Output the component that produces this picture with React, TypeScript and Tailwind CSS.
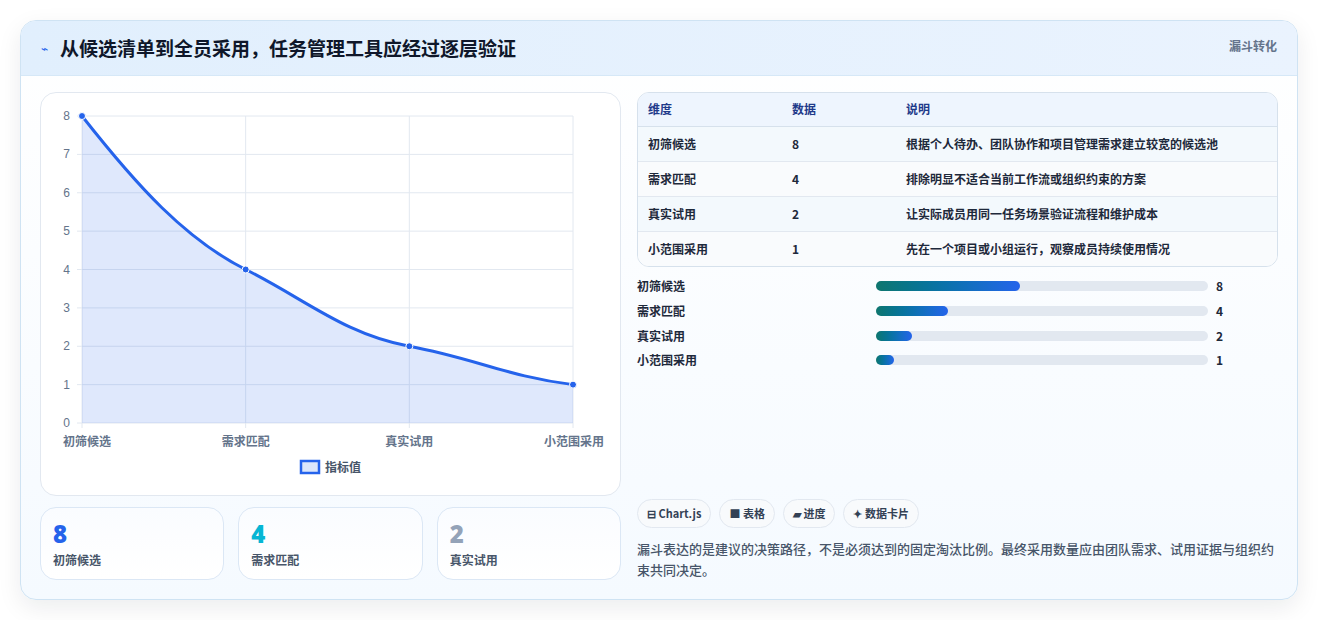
import React from "react";

const rows = [
  ["初筛候选", "8", "根据个人待办、团队协作和项目管理需求建立较宽的候选池"],
  ["需求匹配", "4", "排除明显不适合当前工作流或组织约束的方案"],
  ["真实试用", "2", "让实际成员用同一任务场景验证流程和维护成本"],
  ["小范围采用", "1", "先在一个项目或小组运行，观察成员持续使用情况"],
];

function Chart() {
  const x0 = 41, x1 = 532, yT = 23, yB = 330;
  const xs = [0, 1, 2, 3].map((i) => x0 + ((x1 - x0) / 3) * i);
  const y = (v: number) => yB - ((yB - yT) / 8) * v;
  const vals = [8, 4, 2, 1];
  const p = vals.map((v, i) => [xs[i], y(v)]);
  const d = `M${p[0][0]},${p[0][1]} C${p[0][0] + 55},${p[0][1] + 70} ${p[1][0] - 60},${p[1][1] - 30} ${p[1][0]},${p[1][1]} C${p[1][0] + 60},${p[1][1] + 30} ${p[2][0] - 65},${p[2][1] - 12} ${p[2][0]},${p[2][1]} C${p[2][0] + 65},${p[2][1] + 12} ${p[3][0] - 65},${p[3][1] - 8} ${p[3][0]},${p[3][1]}`;
  const labels = ["初筛候选", "需求匹配", "真实试用", "小范围采用"];
  return (
    <svg width="580" height="402" className="block" style={{ fontFamily: "'Noto Sans CJK SC', sans-serif" }}>
      {[0, 1, 2, 3, 4, 5, 6, 7, 8].map((v) => (
        <g key={v}>
          <line x1={x0 - 5} x2={x1} y1={y(v)} y2={y(v)} stroke="#e2e8f0" />
          <text x={x0 - 12} y={y(v) + 4} textAnchor="end" fontSize="12" fill="#64748b" fontFamily="Liberation Sans, sans-serif">{v}</text>
        </g>
      ))}
      {xs.map((x, i) => (
        <g key={i}>
          <line x1={x} x2={x} y1={yT} y2={yB + 5} stroke="#e2e8f0" />
          <text x={i === 3 ? x + 1 : i === 0 ? x + 5 : x} y={yB + 23} textAnchor="middle" fontSize="12" fontWeight="600" fill="#64748b">{labels[i]}</text>
        </g>
      ))}
      <path d={`${d} L${x1},${yB} L${x0},${yB} Z`} fill="rgba(37,99,235,0.15)" />
      <path d={d} fill="none" stroke="#2563eb" strokeWidth="3" />
      {p.map(([a, b], i) => (
        <circle key={i} cx={a} cy={b} r="3.5" fill="#2563eb" stroke="#fff" strokeWidth="1" />
      ))}
      <rect x="260" y="368" width="18" height="12" fill="#dbe6fb" stroke="#2563eb" strokeWidth="2.5" />
      <text x="284" y="378.5" fontSize="12" fontWeight="600" fill="#475569">指标值</text>
    </svg>
  );
}

export default function App() {
  const f = { fontFamily: "'Noto Sans CJK SC', 'Noto Sans', sans-serif" };
  return (
    <div className="w-[1318px] h-[620px] bg-white p-5" style={f}>
      <div className="h-[580px] rounded-2xl border border-[#cfe3f3] shadow-[0_8px_24px_rgba(15,23,42,0.08)] bg-gradient-to-b from-white to-[#f5faff] overflow-hidden">
        <div className="h-[55px] bg-gradient-to-r from-[#e1effd] to-[#eaf3fe] border-b border-[#d6e8f7] flex items-center justify-between px-5">
          <div className="flex items-center gap-3">
            <span className="text-[#2563eb] text-[12px]">⌁</span>
            <h1 className="text-[19px] font-bold text-[#0f172a]">从候选清单到全员采用，任务管理工具应经过逐层验证</h1>
          </div>
          <span className="text-[12px] font-bold text-[#64748b] self-start mt-4">漏斗转化</span>
        </div>
        <div className="flex gap-4 px-[19px] pt-4">
          <div className="w-[581px] flex flex-col gap-[11px]">
            <div className="h-[404px] rounded-2xl border border-[#e2e8f0] bg-white">
              <Chart />
            </div>
            <div className="grid grid-cols-3 gap-[14px]">
              {[["8", "text-[#2563eb]", "初筛候选"], ["4", "text-[#06b6d4]", "需求匹配"], ["2", "text-[#94a3b8]", "真实试用"]].map(([n, c, l]) => (
                <div key={l} className="h-[73px] rounded-2xl border border-[#dbe7f5] bg-gradient-to-b from-[#fafcff] to-white px-3 pt-[12px]">
                  <div className={`text-[24px] leading-[28px] font-extrabold ${c}`} style={{ fontFamily: "'Open Sans', sans-serif" }}>{n}</div>
                  <div className="text-[12px] text-[#475569] font-semibold mt-[3px]">{l}</div>
                </div>
              ))}
            </div>
          </div>
          <div className="flex-1 flex flex-col h-[488px]">
            <div className="rounded-xl border border-[#d6e1ec] overflow-hidden bg-white">
              <table className="w-full text-[12px] text-[#1e293b] font-semibold">
                <thead>
                  <tr className="bg-[#eef5fe] text-[#1e3a8a] h-[33px] border-b border-[#d6e1ec]">
                    <th className="text-left pl-[10px] w-[154px] font-bold">维度</th>
                    <th className="text-left w-[114px] font-bold">数据</th>
                    <th className="text-left font-bold">说明</th>
                  </tr>
                </thead>
                <tbody>
                  {rows.map((r, i) => (
                    <tr key={i} className={`h-[35px] ${i < 3 ? "border-b border-[#e2e8f0]" : ""} ${i % 2 === 0 ? "bg-[#f3f9fd]" : "bg-[#f9fbfd]"}`}>
                      <td className="pl-[10px]">{r[0]}</td>
                      <td>{r[1]}</td>
                      <td>{r[2]}</td>
                    </tr>
                  ))}
                </tbody>
              </table>
            </div>
            <div className="flex flex-col mt-[7px]">
              {rows.map((r, i) => (
                <div key={i} className="flex items-center h-[24.7px] text-[12px] font-semibold text-[#1e293b]">
                  <span className="w-[239px]">{r[0]}</span>
                  <div className="w-[332px] h-[10px] rounded-full bg-[#e2e8f0]">
                    <div className="h-full rounded-full bg-gradient-to-r from-[#0f766e] to-[#2563eb]" style={{ width: `${(Number(r[1]) / 8) * 43.4}%` }} />
                  </div>
                  <span className="ml-2 font-bold">{r[1]}</span>
                </div>
              ))}
            </div>
            <div className="mt-auto flex gap-2">
              {["⊟ Chart.js", "■ 表格", "▰ 进度", "✦ 数据卡片"].map((t) => (
                <span key={t} className="h-[29px] px-[9px] flex items-center rounded-full border border-[#e2e8f0] bg-[#f8fafc] text-[11px] font-bold text-[#334155]">{t}</span>
              ))}
            </div>
            <p className="mt-[10px] text-[13px] leading-[21px] text-[#475569] font-medium">漏斗表达的是建议的决策路径，不是必须达到的固定淘汰比例。最终采用数量应由团队需求、试用证据与组织约束共同决定。</p>
          </div>
        </div>
      </div>
    </div>
  );
}
